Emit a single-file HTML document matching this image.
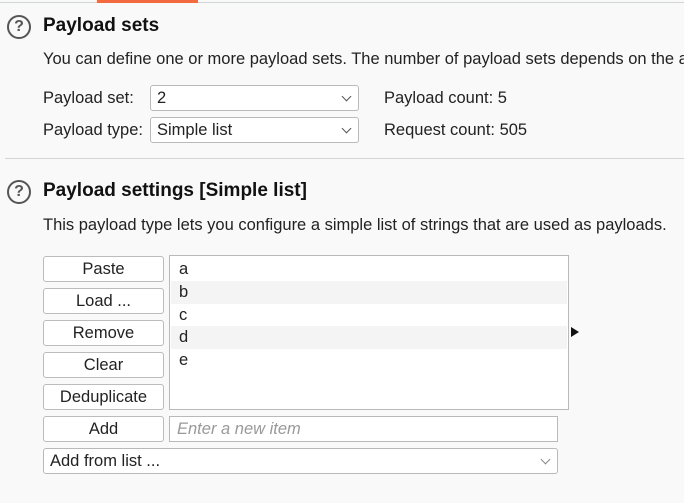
<!DOCTYPE html>
<html><head><meta charset="utf-8"><style>
*{margin:0;padding:0;box-sizing:border-box}
html,body{width:684px;height:503px;overflow:hidden;background:#f9f9f9;font-family:"Liberation Sans",sans-serif;color:#222;font-size:16.5px}
.a{position:absolute;white-space:nowrap}
.q{position:absolute;width:24px;height:24px;border:2px solid #555;border-radius:50%;text-align:center;font-size:16px;line-height:20px;color:#555;font-weight:bold}
.h{font-weight:bold;font-size:19px;color:#111}
.box{position:absolute;border:1px solid #b9b9b9;border-radius:3px;background:#fff}
.btn{position:absolute;left:43px;width:121px;height:26px;border:1px solid #bcbcbc;border-radius:3px;background:#fff;text-align:center;line-height:25px}
.chev{position:absolute;right:8px;top:7px;width:7px;height:7px;border-right:1px solid #555;border-bottom:1px solid #555;transform:rotate(45deg)}
.row{position:absolute;left:1px;right:1px;height:23px;padding-left:8px;line-height:23px}
</style></head><body>
<div class="a" style="left:0;top:2px;width:684px;height:1px;background:#d0d6d8"></div>
<div class="a" style="left:97px;top:0;width:101px;height:3px;background:#f26a3d"></div>

<div class="q" style="left:7px;top:15px">?</div>
<div class="a h" style="left:43px;top:15px">Payload sets</div>
<div class="a" style="left:43px;top:50px;width:641px;overflow:hidden">You can define one or more payload sets. The number of payload sets depends on the attack type</div>
<div class="a" style="left:43px;top:89px">Payload set:</div>
<div class="box" style="left:150px;top:85px;width:209px;height:26px"><span class="a" style="left:6px;top:3px">2</span><div class="chev"></div></div>
<div class="a" style="left:43px;top:121px">Payload type:</div>
<div class="box" style="left:150px;top:117px;width:209px;height:26px"><span class="a" style="left:6px;top:3px">Simple list</span><div class="chev"></div></div>
<div class="a" style="left:384px;top:89px">Payload count: 5</div>
<div class="a" style="left:384px;top:121px">Request count: 505</div>
<div class="a" style="left:5px;top:158px;width:679px;height:1px;background:#d4d4d4"></div>

<div class="q" style="left:7px;top:180px">?</div>
<div class="a h" style="left:43px;top:180px">Payload settings [Simple list]</div>
<div class="a" style="left:43px;top:216px;width:641px;overflow:hidden">This payload type lets you configure a simple list of strings that are used as payloads.</div>

<div class="btn" style="top:256px">Paste</div>
<div class="btn" style="top:288px">Load ...</div>
<div class="btn" style="top:320px">Remove</div>
<div class="btn" style="top:352px">Clear</div>
<div class="btn" style="top:384px">Deduplicate</div>
<div class="btn" style="top:416px">Add</div>

<div class="box" style="left:169px;top:255px;width:400px;height:155px;border-radius:0">
<div class="row" style="top:2px">a</div>
<div class="row" style="top:25px;background:#f4f4f4">b</div>
<div class="row" style="top:48px">c</div>
<div class="row" style="top:70px;background:#f4f4f4">d</div>
<div class="row" style="top:93px">e</div>
</div>
<div class="a" style="left:571px;top:327px;width:0;height:0;border-left:8px solid #111;border-top:5px solid transparent;border-bottom:5px solid transparent"></div>

<div class="box" style="left:169px;top:416px;width:389px;height:26px;border-radius:0"><span class="a" style="left:7px;top:3px;color:#999;font-style:italic">Enter a new item</span></div>
<div class="box" style="left:43px;top:448px;width:515px;height:26px"><span class="a" style="left:6px;top:3px">Add from list ...</span><div class="chev" style="border-color:#888"></div></div>
</body></html>
